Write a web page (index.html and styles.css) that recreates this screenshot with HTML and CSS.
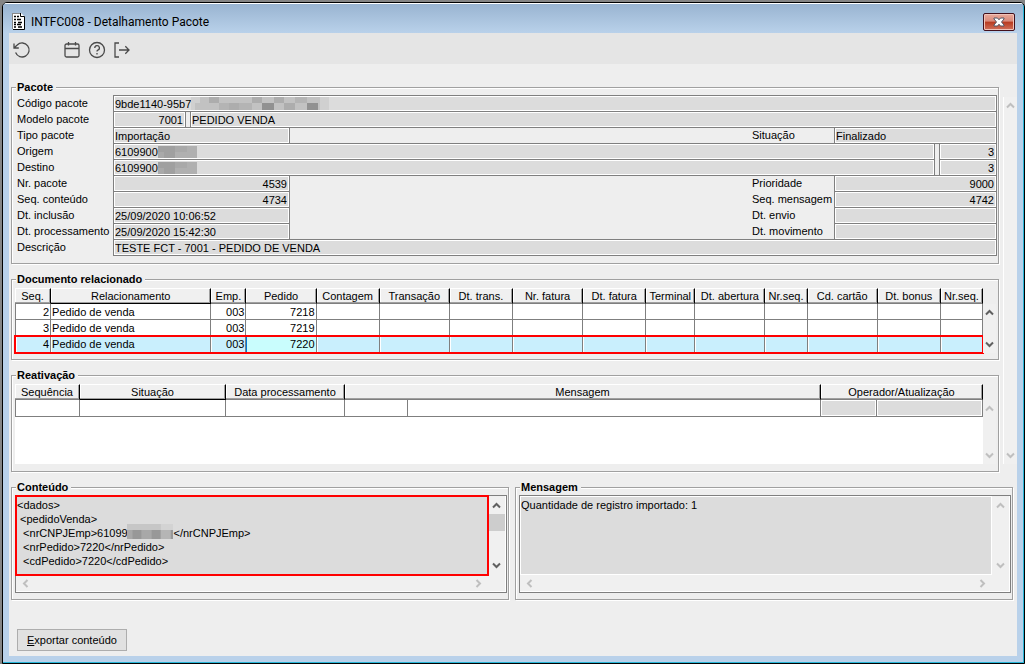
FILE: index.html
```
<!DOCTYPE HTML>
<html lang="pt-BR">
<head>
<meta charset="utf-8">
<title>INTFC008 - Detalhamento Pacote</title>
<link rel="stylesheet" href="styles.css">
</head>
<body>
	<!-- setas das barras de rolagem -->
	<svg class="defs">
		<symbol id="up" viewBox="0 0 9 9"><path d="M1 6.5L4.5 3L8 6.5"/></symbol>
		<symbol id="down" viewBox="0 0 9 9"><path d="M1 2.5L4.5 6L8 2.5"/></symbol>
		<symbol id="left" viewBox="0 0 9 9"><path d="M6.5 1L3 4.5L6.5 8"/></symbol>
		<symbol id="right" viewBox="0 0 9 9"><path d="M2.5 1L6 4.5L2.5 8"/></symbol>
	</svg>

	<div class="window">
		<header class="titlebar">
			<svg class="doc-icon" width="13" height="17" viewBox="0 0 13 17">
				<path d="M0 0H9L12 3V16H0Z" fill="#fff"/>
				<path d="M8.5 0V3.5H12.5V16.5H1" fill="none" stroke="#000"/>
				<path d="M0.5 0V16M0 0.5H8" fill="none" stroke="#888"/>
				<path d="M2 3.5H4M5 3.5H7M2 6.5H4M5 6.5H9M2 9.5H4M6 9.5H10M2 11.5H4M5 11.5H9M2 14H4M6 14H10" stroke="#000" stroke-width="1.4"/>
			</svg>
			<h1>INTFC008 - Detalhamento Pacote</h1>
			<button class="close" aria-label="Fechar">
				<svg width="12" height="10" viewBox="0 0 12 10">
					<path d="M1 1H4.5L6 2.8L7.5 1H11V2L8.5 5L11 8V9H7.5L6 7.2L4.5 9H1V8L3.5 5L1 2Z" fill="#fff" stroke="#535666"/>
				</svg>
			</button>
		</header>

		<nav class="toolbar">
			<button aria-label="Atualizar">
				<svg viewBox="0 0 18 18"><path d="M1 2.5V7H5.8M1.2 6.8L4.2 4A7 7 0 1 1 2.6 11.5"/></svg>
			</button>
			<span class="gap"></span>
			<button aria-label="Calendário">
				<svg viewBox="0 0 18 18"><rect x="2" y="3" width="14" height="13" rx="1.5"/><path d="M2 7.5H16M5.5 1V4.5M12.5 1V4.5"/></svg>
			</button>
			<button aria-label="Ajuda">
				<svg viewBox="0 0 18 18"><circle cx="9" cy="9" r="7.5"/><path d="M6.8 7A2.3 2.3 0 1 1 9.8 9.1Q9 9.5 9 10.5M9 12V13.4"/></svg>
			</button>
			<button aria-label="Sair">
				<svg viewBox="0 0 18 18"><path d="M6 2H2V16H6M6 9H16M12.3 5.3L16 9L12.3 12.7"/></svg>
			</button>
		</nav>

		<main>
			<div class="top">
				<div class="groups">
					<fieldset class="pacote">
						<legend>Pacote</legend>
						<div class="row">
							<label for="codigo">Código pacote</label>
							<div class="field grow">
								<input id="codigo" value="9bde1140-95b7" readonly>
								<svg class="mosaic m-codigo" viewBox="0 0 138 13" preserveAspectRatio="none">
									<path d="M0 0H138V13H0Z" fill="#c2c2c2"/>
									<path d="M0 0H9V6H0ZM0 6H4V13H0ZM129 0H138V13H129Z" fill="#d0d0d0"/>
									<path d="M18 0H28V6H18ZM61 0H71V6H61ZM83 0H93V6H83ZM38 6H48V13H38ZM93 6H104V13H93Z" fill="#adadad"/>
									<path d="M48 6H61V13H48ZM104 0H116V6H104ZM28 6H38V13H28Z" fill="#b4b4b4"/>
									<path d="M71 6H83V13H71ZM116 6H127V13H116Z" fill="#919191"/>
								</svg>
							</div>
						</div>
						<div class="row">
							<label for="modelo">Modelo pacote</label>
							<input id="modelo" class="field num w-code" value="7001" readonly>
							<input class="field grow split" aria-label="Descrição do modelo" value="PEDIDO VENDA" readonly>
						</div>
						<div class="row">
							<label for="tipo">Tipo pacote</label>
							<input id="tipo" class="field w-left" value="Importação" readonly>
							<label for="situacao" class="second">Situação</label>
							<input id="situacao" class="field w-right" value="Finalizado" readonly>
						</div>
						<div class="row">
							<label for="origem">Origem</label>
							<div class="field grow">
								<input id="origem" value="6109900" readonly>
								<svg class="mosaic m-origem" viewBox="0 0 39 12">
									<path d="M0 0H39V12H0Z" fill="#b0b0b0"/>
									<path d="M0 0H17V12H0Z" fill="#a0a0a0"/>
									<path d="M0 6H6V12H0ZM17 0H29V6H17Z" fill="#a9a9a9"/>
								</svg>
							</div>
							<input class="field num w-seq split" aria-label="Sequência origem" value="3" readonly>
						</div>
						<div class="row">
							<label for="destino">Destino</label>
							<div class="field grow">
								<input id="destino" value="6109900" readonly>
								<svg class="mosaic m-origem" viewBox="0 0 39 12">
									<path d="M0 0H39V12H0Z" fill="#b0b0b0"/>
									<path d="M0 0H17V12H0Z" fill="#a0a0a0"/>
									<path d="M0 6H6V12H0ZM17 0H29V6H17Z" fill="#a9a9a9"/>
								</svg>
							</div>
							<input class="field num w-seq split" aria-label="Sequência destino" value="3" readonly>
						</div>
						<div class="row">
							<label for="nr">Nr. pacote</label>
							<input id="nr" class="field num w-left" value="4539" readonly>
							<label for="prioridade" class="second">Prioridade</label>
							<input id="prioridade" class="field num w-right" value="9000" readonly>
						</div>
						<div class="row">
							<label for="seqc">Seq. conteúdo</label>
							<input id="seqc" class="field num w-left" value="4734" readonly>
							<label for="seqm" class="second">Seq. mensagem</label>
							<input id="seqm" class="field num w-right" value="4742" readonly>
						</div>
						<div class="row">
							<label for="inclusao">Dt. inclusão</label>
							<input id="inclusao" class="field w-left" value="25/09/2020 10:06:52" readonly>
							<label for="envio" class="second">Dt. envio</label>
							<input id="envio" class="field w-right" readonly>
						</div>
						<div class="row">
							<label for="proc">Dt. processamento</label>
							<input id="proc" class="field w-left" value="25/09/2020 15:42:30" readonly>
							<label for="mov" class="second">Dt. movimento</label>
							<input id="mov" class="field w-right" readonly>
						</div>
						<div class="row">
							<label for="descricao">Descrição</label>
							<input id="descricao" class="field grow" value="TESTE FCT - 7001 - PEDIDO DE VENDA" readonly>
						</div>
					</fieldset>

					<fieldset class="documento">
						<legend>Documento relacionado</legend>
						<div class="list">
							<table>
								<colgroup>
									<col class="c-seq"><col class="c-rel"><col class="c-emp"><col class="c-70">
									<col class="c-63"><col class="c-70"><col class="c-63"><col class="c-70">
									<col class="c-63"><col class="c-term"><col class="c-70"><col class="c-nr">
									<col class="c-70"><col class="c-63"><col class="c-nr">
								</colgroup>
								<thead>
									<tr>
										<th>Seq.</th><th class="sorted">Relacionamento</th><th>Emp.</th><th>Pedido</th>
										<th>Contagem</th><th>Transação</th><th>Dt. trans.</th><th>Nr. fatura</th>
										<th>Dt. fatura</th><th>Terminal</th><th>Dt. abertura</th><th>Nr.seq.</th>
										<th>Cd. cartão</th><th>Dt. bonus</th><th>Nr.seq.</th>
									</tr>
								</thead>
								<tbody>
									<tr>
										<td class="num">2</td><td>Pedido de venda</td><td class="num">003</td><td class="num">7218</td>
										<td></td><td></td><td></td><td></td><td></td><td></td><td></td><td></td><td></td><td></td><td></td>
									</tr>
									<tr>
										<td class="num">3</td><td>Pedido de venda</td><td class="num">003</td><td class="num">7219</td>
										<td></td><td></td><td></td><td></td><td></td><td></td><td></td><td></td><td></td><td></td><td></td>
									</tr>
									<tr class="selected">
										<td class="num">4</td><td>Pedido de venda</td><td class="num">003</td><td class="num focus">7220</td>
										<td></td><td></td><td></td><td></td><td></td><td></td><td></td><td></td><td></td><td></td><td></td>
									</tr>
								</tbody>
							</table>
							<div class="scroll">
								<button aria-label="Acima"><svg><use href="#up"/></svg></button>
								<button aria-label="Abaixo"><svg><use href="#down"/></svg></button>
							</div>
						</div>
					</fieldset>

					<fieldset class="reativacao">
						<legend>Reativação</legend>
						<div class="list">
							<div class="sheet">
								<table>
									<colgroup>
										<col class="r-seq"><col class="r-sit"><col class="r-data"><col class="c-63">
										<col class="r-msg"><col class="r-op"><col class="r-atu">
									</colgroup>
									<thead>
										<tr>
											<th>Sequência</th><th class="sorted">Situação</th><th>Data processamento</th>
											<th colspan="2">Mensagem</th><th colspan="2">Operador/Atualização</th>
										</tr>
									</thead>
									<tbody>
										<tr>
											<td></td><td></td><td></td><td></td><td></td><td class="off"></td><td class="off"></td>
										</tr>
									</tbody>
								</table>
							</div>
							<div class="scroll disabled">
								<button aria-label="Acima" disabled><svg><use href="#up"/></svg></button>
								<button aria-label="Abaixo" disabled><svg><use href="#down"/></svg></button>
							</div>
						</div>
					</fieldset>
				</div>

				<div class="scroll page disabled">
					<button aria-label="Acima" disabled><svg><use href="#up"/></svg></button>
					<button aria-label="Abaixo" disabled><svg><use href="#down"/></svg></button>
				</div>
			</div>

			<div class="bottom">
				<fieldset>
					<legend id="l-conteudo">Conteúdo</legend>
					<div class="textbox">
						<div class="text marked">
							<textarea aria-labelledby="l-conteudo" wrap="off" readonly>&lt;dados&gt;
 &lt;pedidoVenda&gt;
  &lt;nrCNPJEmp&gt;61099               &lt;/nrCNPJEmp&gt;
  &lt;nrPedido&gt;7220&lt;/nrPedido&gt;
  &lt;cdPedido&gt;7220&lt;/cdPedido&gt;</textarea>
							<svg class="mosaic m-cnpj" viewBox="0 0 53 15" preserveAspectRatio="none">
								<path d="M0 0H53V15H0Z" fill="#c6c6c6"/>
								<path d="M39 0H53V6H39Z" fill="#d3d3d3"/>
								<path d="M0 6H6V15H0ZM17 6H28V15H17Z" fill="#a8a8a8"/>
								<path d="M6 6H17V15H6ZM28 6H39V15H28ZM50 6H53V15H50Z" fill="#989898"/>
								<path d="M39 6H50V15H39Z" fill="#b5b5b5"/>
							</svg>
						</div>
						<div class="scroll">
							<button aria-label="Acima"><svg><use href="#up"/></svg></button>
							<i class="thumb"></i>
							<button aria-label="Abaixo"><svg><use href="#down"/></svg></button>
						</div>
						<div class="scroll horizontal disabled">
							<button aria-label="Esquerda" disabled><svg><use href="#left"/></svg></button>
							<button aria-label="Direita" disabled><svg><use href="#right"/></svg></button>
						</div>
					</div>
				</fieldset>

				<fieldset>
					<legend id="l-mensagem">Mensagem</legend>
					<div class="textbox">
						<div class="text">
							<textarea aria-labelledby="l-mensagem" wrap="off" readonly>Quantidade de registro importado: 1</textarea>
						</div>
						<div class="scroll disabled">
							<button aria-label="Acima" disabled><svg><use href="#up"/></svg></button>
							<button aria-label="Abaixo" disabled><svg><use href="#down"/></svg></button>
						</div>
						<div class="scroll horizontal disabled">
							<button aria-label="Esquerda" disabled><svg><use href="#left"/></svg></button>
							<button aria-label="Direita" disabled><svg><use href="#right"/></svg></button>
						</div>
					</div>
				</fieldset>
			</div>

			<button class="export"><u>E</u>xportar conteúdo</button>
		</main>
	</div>
</body>
</html>
```
FILE: styles.css
```
* {
	box-sizing: border-box;
}

body {
	margin: 0;
	min-height: 100vh;
	padding: 2px 0 0 2px;
	display: flex;
	background: #858585;
	font: 11px/14px "Liberation Sans", Arial, sans-serif;
	color: #000;
}

button, input, textarea {
	font: inherit;
	color: inherit;
	margin: 0;
	padding: 0;
	border: 0;
	border-radius: 0;
	background: none;
}

input, textarea {
	outline: none;
}

.defs {
	display: none;
}

/* janela */
.window {
	flex: 1;
	min-width: 0;
	display: flex;
	flex-direction: column;
	padding: 0 7px 7px 6px;
	border: 1px solid #000;
	border-radius: 5px 5px 0 0;
	background: #b9d1ea;
	box-shadow: inset -1px -1px 0 #29b6d8;
	overflow: hidden;
}

.titlebar {
	height: 30px;
	margin: 0 -6px;
	padding: 6px 8px 0 9px;
	display: flex;
	align-items: center;
	gap: 6px;
	background: linear-gradient(#99b4d1, #b9d1ea);
	border-top: 1px solid #fff;
}

.titlebar h1 {
	flex: 1;
	margin: 0;
	font: 12px/16px Roboto, "Segoe UI", sans-serif;
}

.close {
	width: 32px;
	height: 18px;
	display: flex;
	align-items: center;
	justify-content: center;
	border: 1px solid #43101c;
	border-radius: 2px;
	background: linear-gradient(#e9a99b, #d98a7b 45%, #b83a20 50%, #d0705c);
	box-shadow: inset 0 0 0 1px #f0c3ba;
}

.toolbar {
	height: 31px;
	padding-top: 3px;
	display: flex;
	align-items: center;
	background: #e5e5e5;
}

.toolbar button, .toolbar .gap {
	width: 25px;
	height: 25px;
	display: flex;
	align-items: center;
	justify-content: center;
}

.toolbar svg {
	width: 18px;
	height: 18px;
	fill: none;
	stroke: #4a4a4a;
	stroke-width: 1.3;
}

main {
	flex: 1;
	padding: 16px 0 5px 2px;
	background: #eee;
}

/* grupos */
fieldset {
	min-width: 0;
	margin: 0;
	padding: 1px 1px 6px 3px;
	border: 1px solid #a0a0a0;
	box-shadow: 1px 1px 0 #fff, inset 1px 1px 0 #fff;
}

legend {
	height: 14px;
	margin-left: 1px;
	padding: 0 3px 0 1px;
	font-weight: bold;
	background: #eee;
}

.top {
	display: flex;
	gap: 4px;
}

.groups {
	flex: 1;
	min-width: 0;
	display: flex;
	flex-direction: column;
	gap: 8px;
}

.pacote {
	padding: 1px 1px 8px 5px;
}

.pacote legend {
	margin-left: -1px;
}

.row {
	display: flex;
	height: 16px;
}

.row label {
	width: 96px;
	line-height: 16px;
	white-space: nowrap;
}

.row .second {
	width: 82px;
	margin-left: auto;
}

/* cada campo cobre a borda do campo seguinte */
.field {
	position: relative;
	height: 17px;
	min-width: 0;
	padding: 1px 2px 0 1px;
	border: 1px solid #7f7f7f;
	background: #dcdcdc;
	box-shadow: inset 0 0 0 1px #fff;
}

.field input {
	display: block;
	width: 100%;
	height: 14px;
}

.grow {
	flex: 1;
}

.split {
	margin-left: 4px;
}

.w-code {
	width: 73px;
}

.w-left {
	width: 177px;
}

.w-right {
	width: 163px;
}

.w-seq {
	width: 58px;
}

.num {
	text-align: right;
}

/* dados ocultados */
.mosaic {
	position: absolute;
}

.m-codigo {
	left: 77px;
	top: 1px;
	width: 138px;
	height: 13px;
}

.m-origem {
	left: 44px;
	top: 2px;
	width: 39px;
	height: 12px;
}

.m-cnpj {
	left: 111px;
	top: 28px;
	width: 46px;
	height: 15px;
}

/* listas */
.documento, .reativacao {
	padding: 2px 2px 6px 3px;
}

.reativacao {
	padding-bottom: 7px;
}

.list {
	display: flex;
}

.list table {
	flex: 1;
	width: 100%;
	min-width: 0;
	table-layout: fixed;
	border-collapse: separate;
	border-spacing: 0;
}

.sheet {
	flex: 1;
	min-width: 0;
	min-height: 80px;
	background: #fff;
}

th, td {
	height: 16px;
	padding: 0;
	line-height: 14px;
	white-space: nowrap;
	overflow: hidden;
}

th {
	font-weight: normal;
	background: #f0f0f0;
	border-top: 1px solid #fff;
	border-right: 1px solid #000;
	border-bottom: 1px solid #7f7f7f;
	box-shadow: inset -1px -1px 0 #a0a0a0, inset 1px 0 0 #fff;
}

.sorted {
	border-bottom-color: #000;
}

td {
	padding: 1px 1px 0;
	background: #fff;
	border-right: 1px solid #7f7f7f;
	border-bottom: 1px solid #7f7f7f;
}

td:first-child {
	border-left: 1px solid #7f7f7f;
}

.sheet td {
	height: 17px;
}

.selected td {
	height: 17px;
	padding-top: 0;
	background: #c9effd;
	box-shadow: inset 1px 0 0 #fff;
}

.selected .focus {
	background: #c9fdfd;
	box-shadow: inset 1px 0 0 #0078d7;
}

.selected {
	outline: 2px solid #f00;
	outline-offset: -1px;
}

td.off {
	background: #dcdcdc;
	box-shadow: inset 0 0 0 1px #fff;
}

.c-seq { width: 36px; }
.c-rel { width: 160px; }
.c-emp { width: 35px; }
.c-63 { width: 63px; }
.c-70 { width: 70px; }
.c-term { width: 49px; }
.c-nr { width: 42px; }
.r-seq { width: 65px; }
.r-sit { width: 146px; }
.r-data { width: 119px; }
.r-msg { width: 413px; }
.r-op { width: 56px; }
.r-atu { width: 106px; }

/* barras de rolagem */
.scroll {
	display: flex;
	flex-direction: column;
	justify-content: space-between;
	background: #f0f0f0;
}

.list .scroll {
	width: 13px;
	margin-top: 16px;
}

.page {
	width: 14px;
	margin: 17px 0 8px;
	border-left: 1px solid #fff;
}

.scroll button {
	flex: none;
	height: 17px;
	display: flex;
	align-items: center;
	justify-content: center;
}

.scroll svg {
	width: 9px;
	height: 9px;
	fill: none;
	stroke: #606060;
	stroke-width: 2;
}

.disabled svg {
	stroke: #bfbfbf;
}

.thumb {
	height: 17px;
	margin-bottom: auto;
	background: #cdcdcd;
}

/* conteudo e mensagem */
.bottom {
	display: grid;
	grid-template-columns: 1fr 1fr;
	gap: 6px;
	margin: 8px 4px 0 0;
}

.textbox {
	display: grid;
	grid-template: 79px 16px / 1fr 17px;
	padding: 0 1px 1px 0;
	border: 1px solid #7f7f7f;
	background: #f0f0f0;
	box-shadow: inset -1px -1px 0 #fff;
}

.textbox .scroll {
	padding: 1px 0;
}

.textbox .horizontal {
	flex-direction: row;
	padding: 0 1px;
}

.horizontal button {
	width: 17px;
	height: 16px;
}

.text {
	position: relative;
	min-width: 0;
}

.text textarea {
	display: block;
	width: 100%;
	height: 100%;
	padding: 1px 0 0;
	border: 1px solid #fff;
	background: #dcdcdc;
	resize: none;
	overflow: hidden;
	white-space: pre;
}

.marked textarea {
	outline: 2px solid #f00;
	outline-offset: -1px;
}

.export {
	display: block;
	height: 22px;
	margin: 29px 0 0 6px;
	padding: 0 9px;
	border: 1px solid #adadad;
	background: #e1e1e1;
}
```
